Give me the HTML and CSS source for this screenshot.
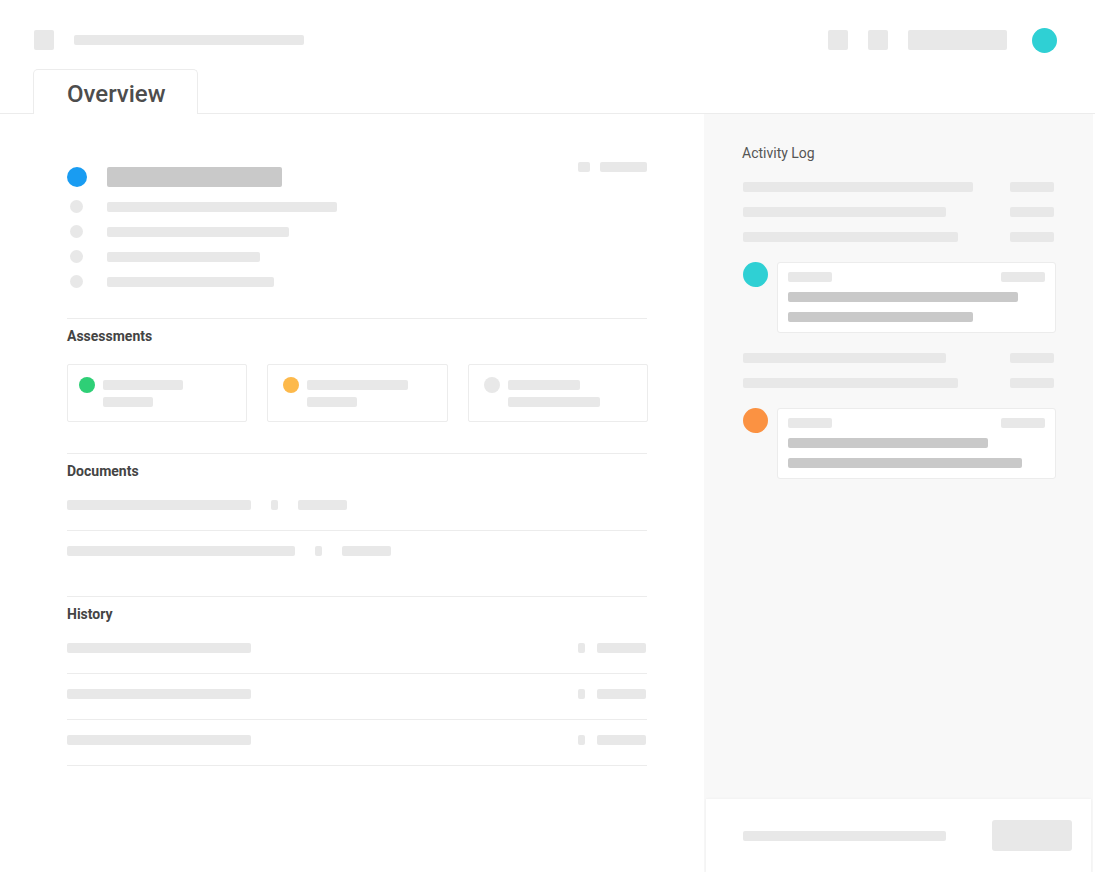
FILE: index.html
```html
<!DOCTYPE html>
<html lang="en">

<head>
  <meta charset="UTF-8" />
  <meta name="viewport" content="width=device-width, initial-scale=1.0" />
  <title>Overview</title>
  <link rel="stylesheet" href="styles.css">
</head>

<body>
  <header class="topbar">
    <div class="topbar-row">
      <div class="brand">
        <span class="sk sq"></span>
        <span class="sk" style="width:230px"></span>
      </div>
      <div class="actions">
        <span class="sk sq"></span>
        <span class="sk sq"></span>
        <span class="sk search"></span>
        <span class="avatar teal"></span>
      </div>
    </div>
    <nav class="tabs">
      <div class="tab active">Overview</div>
    </nav>
  </header>

  <div class="layout">
    <main class="main">
      <section class="summary">
        <div class="summary-head">
          <div class="summary-title">
            <span class="dot dot-lg blue"></span>
            <span class="sk dark title-bar" style="width:175px"></span>
          </div>
          <div class="meta">
            <span class="sk" style="width:12px"></span>
            <span class="sk" style="width:47px"></span>
          </div>
        </div>
        <ul class="props">
          <li><span class="dot dot-sm"></span><span class="sk" style="width:230px"></span></li>
          <li><span class="dot dot-sm"></span><span class="sk" style="width:182px"></span></li>
          <li><span class="dot dot-sm"></span><span class="sk" style="width:153px"></span></li>
          <li><span class="dot dot-sm"></span><span class="sk" style="width:167px"></span></li>
        </ul>
      </section>

      <section class="section assessments">
        <h2>Assessments</h2>
        <div class="cards">
          <div class="card">
            <span class="dot dot-md green"></span>
            <div class="card-lines">
              <span class="sk" style="width:80px"></span>
              <span class="sk" style="width:50px"></span>
            </div>
          </div>
          <div class="card">
            <span class="dot dot-md amber"></span>
            <div class="card-lines">
              <span class="sk" style="width:101px"></span>
              <span class="sk" style="width:50px"></span>
            </div>
          </div>
          <div class="card">
            <span class="dot dot-md"></span>
            <div class="card-lines">
              <span class="sk" style="width:72px"></span>
              <span class="sk" style="width:92px"></span>
            </div>
          </div>
        </div>
      </section>

      <section class="section documents">
        <h2>Documents</h2>
        <ul class="rows">
          <li>
            <span class="sk" style="width:184px"></span>
            <span class="sk" style="width:7px"></span>
            <span class="sk" style="width:49px"></span>
          </li>
          <li>
            <span class="sk" style="width:228px"></span>
            <span class="sk" style="width:7px"></span>
            <span class="sk" style="width:49px"></span>
          </li>
        </ul>
      </section>

      <section class="section history">
        <h2>History</h2>
        <ul class="rows">
          <li>
            <span class="sk" style="width:184px"></span>
            <span class="row-meta"><span class="sk" style="width:7px"></span><span class="sk" style="width:49px"></span></span>
          </li>
          <li>
            <span class="sk" style="width:184px"></span>
            <span class="row-meta"><span class="sk" style="width:7px"></span><span class="sk" style="width:49px"></span></span>
          </li>
          <li>
            <span class="sk" style="width:184px"></span>
            <span class="row-meta"><span class="sk" style="width:7px"></span><span class="sk" style="width:49px"></span></span>
          </li>
        </ul>
      </section>
    </main>

    <aside class="activity">
      <h3>Activity Log</h3>
      <div class="log">
        <div class="log-row"><span class="sk" style="width:230px"></span><span class="sk" style="width:44px"></span></div>
        <div class="log-row"><span class="sk" style="width:203px"></span><span class="sk" style="width:44px"></span></div>
        <div class="log-row"><span class="sk" style="width:215px"></span><span class="sk" style="width:44px"></span></div>

        <div class="log-entry">
          <span class="avatar teal"></span>
          <div class="entry-card">
            <div class="entry-top"><span class="sk" style="width:44px"></span><span class="sk" style="width:44px"></span></div>
            <span class="sk dark" style="width:230px"></span>
            <span class="sk dark" style="width:185px"></span>
          </div>
        </div>

        <div class="log-row"><span class="sk" style="width:203px"></span><span class="sk" style="width:44px"></span></div>
        <div class="log-row"><span class="sk" style="width:215px"></span><span class="sk" style="width:44px"></span></div>

        <div class="log-entry">
          <span class="avatar orange"></span>
          <div class="entry-card">
            <div class="entry-top"><span class="sk" style="width:44px"></span><span class="sk" style="width:44px"></span></div>
            <span class="sk dark" style="width:200px"></span>
            <span class="sk dark" style="width:234px"></span>
          </div>
        </div>
      </div>

      <div class="activity-foot">
        <span class="sk" style="width:203px"></span>
        <span class="sk foot-btn"></span>
      </div>
    </aside>
  </div>
</body>

</html>
```

FILE: styles.css
```css
* {
  box-sizing: border-box;
}

body {
  margin: 0;
  font-family: Roboto, "Liberation Sans", sans-serif;
  background: #fff;
  color: #444;
}

/* skeleton bars */
.sk {
  display: block;
  flex-shrink: 0;
  height: 10px;
  background: #e8e8e8;
  border-radius: 2px;
}

.sk.dark {
  background: #c9c9c9;
}

.dot {
  display: block;
  flex-shrink: 0;
  border-radius: 50%;
  background: #e8e8e8;
}

.blue {
  background: #199cf2;
}

.green {
  background: #2ecf76;
}

.amber {
  background: #fdb94b;
}

.teal {
  background: #2fd0d4;
}

.orange {
  background: #fb9242;
}

/* header */
.topbar {
  padding: 30px 38px 0 34px;
  border-bottom: 1px solid #ececec;
}

.topbar-row {
  display: flex;
  justify-content: space-between;
  align-items: center;
  height: 20px;
}

.brand,
.actions {
  display: flex;
  align-items: center;
  gap: 20px;
}

.sk.sq {
  width: 20px;
  height: 20px;
}

.sk.search {
  width: 99px;
  height: 20px;
}

.avatar {
  display: block;
  flex-shrink: 0;
  width: 25px;
  height: 25px;
  border-radius: 50%;
}

.actions .avatar {
  margin-left: 5px;
}

.tabs {
  display: flex;
  margin-top: 19px;
}

.tab {
  width: 165px;
  margin-left: -1px;
  margin-bottom: -1px;
  padding: 10px 0 6px 33px;
  border: 1px solid #ececec;
  border-bottom: none;
  border-radius: 5px 5px 0 0;
  background: #fff;
  font-size: 24px;
  line-height: 28px;
  font-weight: 500;
  color: #4d4d4d;
}

/* body */
.layout {
  display: flex;
  height: 758px;
}

.main {
  width: 704px;
  padding: 48px 57px 0 67px;
}

.summary {
  margin-bottom: 24px;
}

.summary-head {
  display: flex;
  justify-content: space-between;
  align-items: flex-start;
}

.summary-title {
  display: flex;
  align-items: center;
  gap: 20px;
  margin-top: 5px;
}

.dot-lg {
  width: 20px;
  height: 20px;
}

.sk.title-bar {
  height: 20px;
}

.meta {
  display: flex;
  gap: 10px;
}

.props {
  list-style: none;
  margin: 7px 0 0;
  padding: 0;
}

.props li {
  display: flex;
  align-items: center;
  height: 25px;
  gap: 20px;
}

.dot-sm {
  width: 13px;
  height: 13px;
  margin: 0 4px 0 3px;
}

.section {
  border-top: 1px solid #ececec;
}

.section h2 {
  margin: 0;
  padding-top: 9px;
  font-size: 14px;
  line-height: 16px;
  font-weight: 700;
  color: #444;
}

.cards {
  display: grid;
  grid-template-columns: repeat(3, 1fr);
  gap: 20px;
  margin: 20px -1px 0 0;
  padding-bottom: 31px;
}

.card {
  display: flex;
  align-items: flex-start;
  gap: 8px;
  height: 58px;
  padding: 12px 12px 14px 11px;
  border: 1px solid #ececec;
  border-radius: 2px;
}

.card + .card {
  padding-left: 15px;
}

.dot-md {
  width: 16px;
  height: 16px;
}

.card-lines {
  display: flex;
  flex-direction: column;
  gap: 7px;
  margin-top: 3px;
}

.rows {
  list-style: none;
  margin: 6px 0 0;
  padding: 0;
}

.rows li {
  display: flex;
  align-items: center;
  padding: 15px 0 20px;
  border-bottom: 1px solid #ececec;
}

.documents {
  padding-bottom: 20px;
}

.documents .rows li {
  gap: 20px;
}

.documents .rows li:last-child {
  border-bottom: none;
}

.history .rows li {
  justify-content: space-between;
}

.row-meta {
  display: flex;
  gap: 12px;
  margin-right: 1px;
}

/* activity panel */
.activity {
  width: 389px;
  padding: 31px 39px 0;
  background: #f8f8f8;
  display: flex;
  flex-direction: column;
}

.activity h3 {
  margin: 0 0 0 -1px;
  font-size: 14px;
  line-height: 16px;
  font-weight: 400;
  color: #555;
}

.log {
  display: flex;
  flex-direction: column;
  margin-top: 21px;
}

.log-row {
  display: flex;
  justify-content: space-between;
  margin-bottom: 15px;
}

.log-entry {
  display: flex;
  align-items: flex-start;
  gap: 9px;
  margin: 5px -2px 20px 0;
}

.entry-card {
  flex: 1;
  display: flex;
  flex-direction: column;
  gap: 10px;
  padding: 9px 10px 10px;
  background: #fff;
  border: 1px solid #ececec;
  border-radius: 3px;
}

.entry-top {
  display: flex;
  justify-content: space-between;
}

.activity-foot {
  margin: auto -37px 0;
  height: 73px;
  padding: 0 19px 0 37px;
  display: flex;
  align-items: center;
  justify-content: space-between;
  background: #fff;
  box-shadow: 0 0 3px rgba(0, 0, 0, 0.05);
}

.sk.foot-btn {
  width: 80px;
  height: 31px;
  border-radius: 3px;
}
```
